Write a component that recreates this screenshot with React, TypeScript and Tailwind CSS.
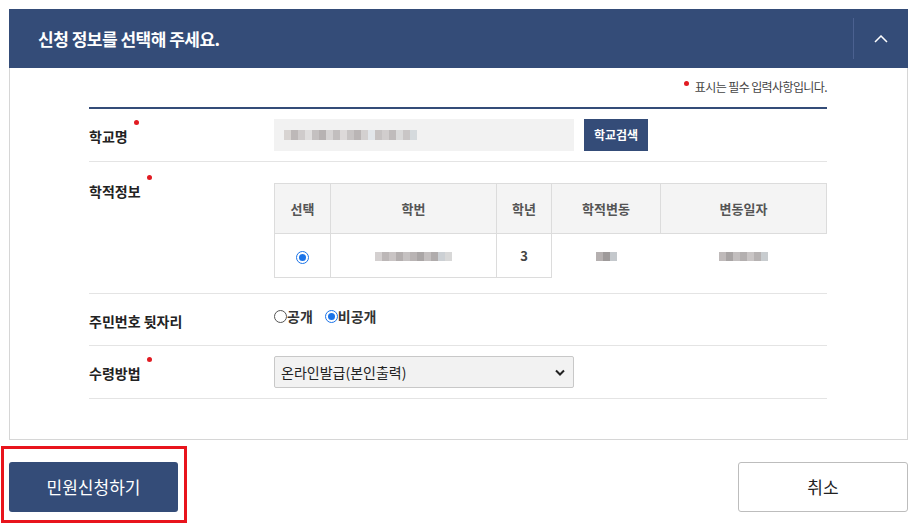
import React from "react";

const FONT = "font-['Noto_Sans_CJK_KR','Noto_Sans',sans-serif]";

function Blur({ shades, h = 10 }: { shades: string[]; h?: number }) {
  return (
    <span className="inline-flex blur-[0.6px]">
      {shades.map((c, i) => (
        <span key={i} className="inline-block w-[7px]" style={{ height: h, backgroundColor: c }} />
      ))}
    </span>
  );
}

function Req() {
  return <span className="absolute -top-[6px] -right-[11px] h-[5px] w-[5px] rounded-full bg-[#e11b22]" />;
}

function Label({ text, req }: { text: string; req?: boolean }) {
  return (
    <div className="w-[185px] shrink-0">
      <span className="relative text-[14px] font-bold text-[#222]">
        {text}
        {req && <Req />}
      </span>
    </div>
  );
}

function Radio({ checked }: { checked?: boolean }) {
  return checked ? (
    <span className="inline-flex h-[13px] w-[13px] items-center justify-center rounded-full border border-[#1a73e8] bg-white">
      <span className="h-[7px] w-[7px] rounded-full bg-[#1a73e8]" />
    </span>
  ) : (
    <span className="inline-block h-[13px] w-[13px] rounded-full border border-[#555] bg-white" />
  );
}

const g1 = ["#d8d4d2", "#bdb8b8", "#cfcbcb", "#e0dede", "#c4c0c0", "#b7b2b2", "#d6d3d3", "#c2bebe", "#ddd9d9", "#c8c4c4", "#bab5b5", "#d3d0d0", "#e2e6ea", "#c6c2c2", "#d1cdcd", "#bfbbbb", "#dadada", "#c9c6c6", "#d5dadd"];
const g2 = ["#d4d0d0", "#bcb7b7", "#c9c4c4", "#b3aeae", "#c5c1c1", "#b9b4b4", "#aaa6a6", "#c3bfbf", "#b0acac", "#ccd0d4", "#d8d8d8"];

export default function App() {
  return (
    <div className={`${FONT} relative h-[527px] w-[915px] overflow-hidden bg-white text-[#333]`}>
      <div className="pl-[9px] pr-[7px] pt-[9px]">
        <div className="flex h-[59px] items-center bg-[#344c78]">
          <h2 className="flex-1 pl-[29px] text-[17px] font-bold tracking-[-0.5px] text-white">신청 정보를 선택해 주세요.</h2>
          <div className="flex h-[41px] w-[55px] items-center justify-center border-l border-[#4b6190]">
            <svg width="14" height="8" viewBox="0 0 14 8" fill="none">
              <path d="M1 7L7 1L13 7" stroke="white" strokeWidth="1.5" />
            </svg>
          </div>
        </div>
        <div className="h-[372px] border border-t-0 border-[#d6d6d6] pl-[79px] pr-[80px] pt-[10px]">
          <p className="flex items-center justify-end text-[12px] tracking-[-0.6px] text-[#444]">
            <span className="relative mr-[6px] -mt-[8px] h-[5px] w-[5px] rounded-full bg-[#e11b22]" />
            표시는 필수 입력사항입니다.
          </p>
          <div className="mt-[11px] border-t-2 border-[#344c78]">
            <div className="flex h-[53px] items-center border-b border-[#e4e4e4]">
              <Label text="학교명" req />
              <div className="flex h-[32px] w-[300px] items-center bg-[#f2f2f2] px-[10px]">
                <Blur shades={g1} h={10} />
              </div>
              <button className="ml-[10px] h-[32px] bg-[#344c78] px-[10px] text-[12px] font-bold text-white">학교검색</button>
            </div>
            <div className="flex h-[132px] border-b border-[#e4e4e4] pt-[20px]">
              <div className="-mt-[4px]">
                <Label text="학적정보" req />
              </div>
              <table className="mt-[1px] h-[94px] w-[553px] border-collapse text-center text-[13px]">
                <thead>
                  <tr className="h-[50px] bg-[#f4f4f4] font-bold text-[#555]">
                    <th className="w-[56px] border border-[#dcdcdc]">선택</th>
                    <th className="w-[166px] border border-[#dcdcdc]">학번</th>
                    <th className="w-[55px] border border-[#dcdcdc]">학년</th>
                    <th className="w-[109px] border border-[#dcdcdc]">학적변동</th>
                    <th className="border border-[#dcdcdc]">변동일자</th>
                  </tr>
                </thead>
                <tbody>
                  <tr className="h-[44px]">
                    <td className="border border-[#dcdcdc]">
                      <span className="inline-flex align-middle">
                        <Radio checked />
                      </span>
                    </td>
                    <td className="border border-[#dcdcdc]">
                      <Blur shades={g2} h={9} />
                    </td>
                    <td className="border border-[#dcdcdc] font-bold text-[#444]">3</td>
                    <td className="border border-transparent">
                      <Blur shades={["#b5b0b0", "#9e9a9a", "#c4c8cc"]} h={9} />
                    </td>
                    <td className="border border-transparent">
                      <Blur shades={["#bfbaba", "#a8a4a4", "#c2bebe", "#b3afaf", "#c9c5c5", "#b6b2b2", "#c8cccf"]} h={9} />
                    </td>
                  </tr>
                </tbody>
              </table>
            </div>
            <div className="flex h-[52px] items-center border-b border-[#e4e4e4]">
              <Label text="주민번호 뒷자리" />
              <div className="-mt-[6px] flex items-center text-[14px] font-bold text-[#333]">
                <label className="flex items-center">
                  <Radio />
                  <span>공개</span>
                </label>
                <label className="ml-[12px] flex items-center">
                  <Radio checked />
                  <span>비공개</span>
                </label>
              </div>
            </div>
            <div className="flex h-[53px] items-center border-b border-[#e4e4e4]">
              <Label text="수령방법" req />
              <div className="flex h-[32px] w-[300px] items-center justify-between rounded-[2px] border border-[#c8c8c8] bg-[#f2f2f2] pl-[6px] pr-[8px] text-[14px] text-[#222]">
                <span>온라인발급(본인출력)</span>
                <svg width="10" height="7" viewBox="0 0 10 7">
                  <path d="M1 1.5L5 5.5L9 1.5" stroke="#222" strokeWidth="2" fill="none" />
                </svg>
              </div>
            </div>
          </div>
        </div>
        <div className="mt-[22px] flex items-start justify-between">
          <div className="relative">
            <div className="pointer-events-none absolute -top-[16px] -left-[8px] h-[77px] w-[186px] border-[3px] border-[#e8141c]" />
            <button className="h-[50px] w-[169px] rounded-[3px] bg-[#344c78] text-[17px] text-white">민원신청하기</button>
          </div>
          <button className="h-[50px] w-[170px] rounded-[3px] border border-[#bdbdbd] bg-white text-[17px] text-[#222]">취소</button>
        </div>
      </div>
    </div>
  );
}
